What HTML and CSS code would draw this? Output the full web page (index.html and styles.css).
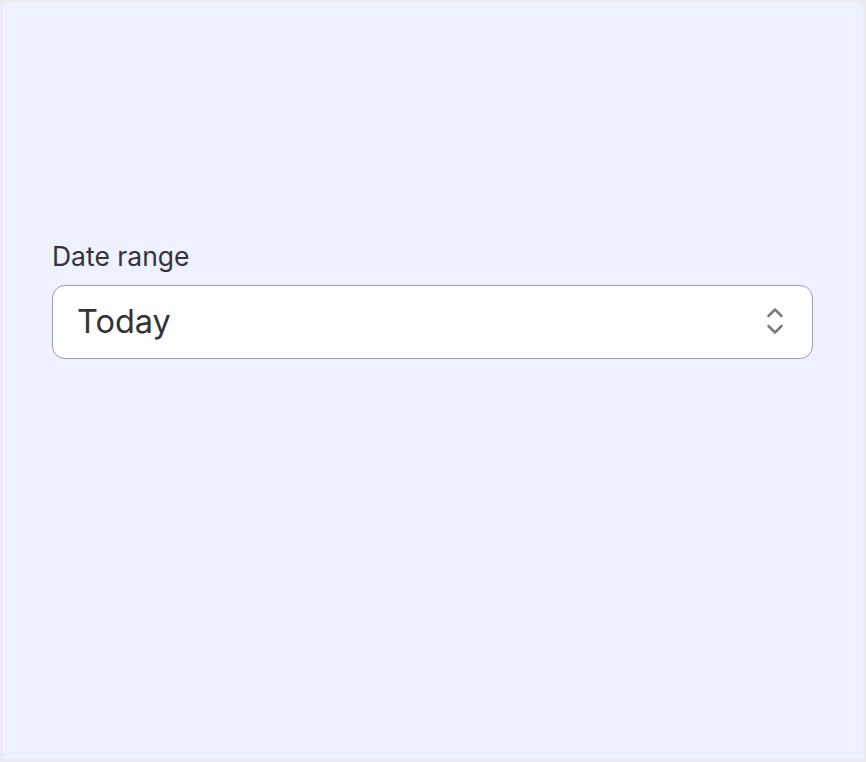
FILE: index.html
```html
<!DOCTYPE html>
<html>
<head>
<meta charset="utf-8">
<link rel="stylesheet" href="styles.css">
</head>
<body>
<div class="frame">
  <div class="field">
    <label class="label">Date range</label>
    <div class="select">
      <span class="value">Today</span>
      <svg class="chev" width="20" height="32" viewBox="0 0 20 32" fill="none" stroke="#7a7a80" stroke-width="2.5" stroke-linecap="round" stroke-linejoin="round">
        <path d="M3.5 11 L10 4.5 L16.5 11"/>
        <path d="M3.5 21 L10 27.5 L16.5 21"/>
      </svg>
    </div>
  </div>
</div>
</body>
</html>
```
FILE: styles.css
```css
html, body {
  margin: 0;
  padding: 0;
}
body {
  width: 866px;
  height: 762px;
  background: #ececf0;
  font-family: Inter, "Noto Sans", sans-serif;
}
.frame {
  box-sizing: border-box;
  margin: 3px;
  width: 860px;
  height: 756px;
  background: #eef1ff;
  padding: 237px 0 0 49px;
}
.field {
  width: 761px;
  display: flex;
  flex-direction: column;
  gap: 13px;
}
.label {
  font-size: 26.5px;
  color: #333338;
  line-height: 32px;
}
.select {
  box-sizing: border-box;
  height: 74px;
  background: #ffffff;
  border: 1px solid #9a9cb0;
  border-radius: 13px;
  display: flex;
  align-items: center;
  justify-content: space-between;
  padding: 0 27px 2px 24px;
}
.value {
  font-size: 32.5px;
  color: #333338;
}
.chev {
  display: block;
}
```
